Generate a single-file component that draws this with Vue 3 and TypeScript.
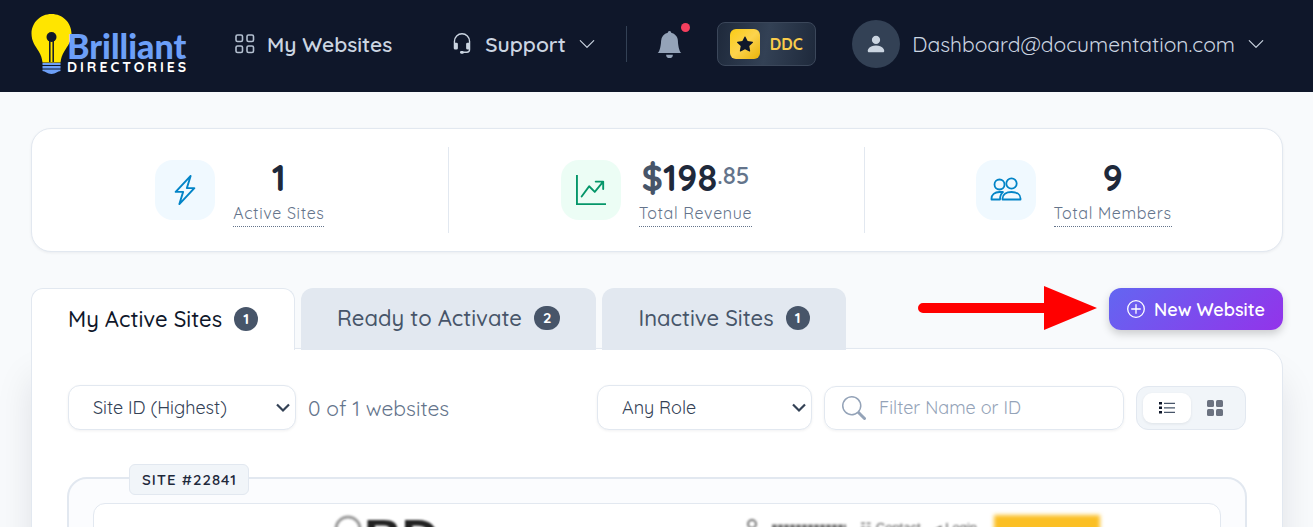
<script setup lang="ts">
import { ref } from 'vue'

interface Stat { id: string; label: string; whole: string; prefix?: string; cents?: string; tone: string; icon: string }
interface Tab { id: string; label: string; count: number }

const stats: Stat[] = [
  { id: 'sites', label: 'Active Sites', whole: '1', tone: 'sky', icon: 'bolt' },
  { id: 'revenue', label: 'Total Revenue', whole: '198', prefix: '$', cents: '.85', tone: 'green', icon: 'chart' },
  { id: 'members', label: 'Total Members', whole: '9', tone: 'sky', icon: 'people' },
]
const tabs: Tab[] = [
  { id: 'active', label: 'My Active Sites', count: 1 },
  { id: 'ready', label: 'Ready to Activate', count: 2 },
  { id: 'inactive', label: 'Inactive Sites', count: 1 },
]
const current = ref('active')
const sort = ref('highest')
const role = ref('any')
const query = ref('')
const view = ref('list')
</script>

<template>
  <div class="page">
    <header class="topbar">
      <a class="logo" href="#" aria-label="Brilliant Directories">
        <svg width="156" height="62" viewBox="0 0 156 62">
          <path fill="#ffe500" d="M20.500 1C9.400 1 .5 9.700 .5 20.500c0 8 4 12.500 7 17.500 2.600 4.200 3.500 7 4 11.500h18c.5-4.500 1.400-7.300 4-11.500 3-5 7-9.500 7-17.500C40.500 9.700 31.600 1 20.500 1z" />
          <circle cx="20.500" cy="24" r="5" fill="#0f172a" />
          <path d="M18.800 26v23M22.200 26v23" stroke="#0f172a" stroke-width="1.500" />
          <path fill="#6c9ff8" d="M11.500 50h18v2h-18zM11.500 53h18v2.500h-18zM11.500 56.500h18v1.500c-3 0-4.500 3-9 3s-6-3-9-3z" />
          <text x="36" y="46" class="logo-name">Brilliant</text>
          <text x="36" y="59" class="logo-sub">DIRECTORIES</text>
        </svg>
      </a>
      <nav class="nav">
        <a class="nav-link" href="#">
          <svg width="20" height="20" viewBox="0 0 20 20" fill="none" stroke="#b4c0d0" stroke-width="1.600">
            <rect x="1" y="1" width="6.500" height="6.500" rx="1.500" /><rect x="12" y="1" width="6.500" height="6.500" rx="1.500" />
            <rect x="1" y="12" width="6.500" height="6.500" rx="1.500" /><rect x="12" y="12" width="6.500" height="6.500" rx="1.500" />
          </svg>
          My Websites
        </a>
        <button class="nav-link" type="button">
          <svg width="22" height="22" viewBox="0 0 16 16" fill="currentColor"><path d="M8 1a5 5 0 0 0-5 5v1h1a1 1 0 0 1 1 1v3a1 1 0 0 1-1 1H3a1 1 0 0 1-1-1V6a6 6 0 1 1 12 0v6a2.500 2.500 0 0 1-2.500 2.500H9.366a1 1 0 0 1-.866.5h-1a1 1 0 1 1 0-2h1a1 1 0 0 1 .866.5H11.500A1.500 1.500 0 0 0 13 12h-1a1 1 0 0 1-1-1V8a1 1 0 0 1 1-1h1V6a5 5 0 0 0-5-5" /></svg>
          Support
          <svg width="18" height="18" viewBox="0 0 16 16" fill="currentColor"><path d="M1.646 4.646a.5.5 0 0 1 .708 0L8 10.293l5.646-5.647a.5.5 0 0 1 .708.708l-6 6a.5.5 0 0 1-.708 0l-6-6a.5.5 0 0 1 0-.708" /></svg>
        </button>
      </nav>
      <span class="rule"></span>
      <button class="bell" type="button" aria-label="Notifications">
        <svg width="27" height="27" viewBox="0 0 16 16" fill="#94a3b8"><path d="M8 16a2 2 0 0 0 2-2H6a2 2 0 0 0 2 2m.995-14.901a1 1 0 1 0-1.990 0A5 5 0 0 0 3 6c0 1.098-.5 6-2 7h14c-1.500-1-2-5.902-2-7 0-2.420-1.720-4.440-4.005-4.901" /></svg>
        <span class="dot"></span>
      </button>
      <button class="ddc" type="button">
        <span class="star"><svg width="16" height="16" viewBox="0 0 16 16" fill="#0f172a"><path d="M3.612 15.443c-.386.198-.824-.149-.746-.592l.83-4.730L.173 6.765c-.329-.314-.158-.888.283-.95l4.898-.696L7.538.792c.197-.39.73-.39.927 0l2.184 4.327 4.898.696c.441.062.612.636.282.95l-3.522 3.356.83 4.730c.078.443-.36.79-.746.592L8 13.187l-4.389 2.256z" /></svg></span>
        DDC
      </button>
      <button class="account" type="button">
        <span class="avatar"><svg width="22" height="22" viewBox="0 0 16 16" fill="#cbd5e1"><path d="M3 14s-1 0-1-1 1-4 6-4 6 3 6 4-1 1-1 1zm5-6a3 3 0 1 0 0-6 3 3 0 0 0 0 6" /></svg></span>
        <span>Dashboard@documentation.com</span>
        <svg width="18" height="18" viewBox="0 0 16 16" fill="currentColor"><path d="M1.646 4.646a.5.5 0 0 1 .708 0L8 10.293l5.646-5.647a.5.5 0 0 1 .708.708l-6 6a.5.5 0 0 1-.708 0l-6-6a.5.5 0 0 1 0-.708" /></svg>
      </button>
    </header>

    <main class="main">
      <section class="stats">
        <div v-for="s in stats" :key="s.id" class="stat">
          <span class="stat-icon" :class="s.tone">
            <svg v-if="s.icon === 'bolt'" width="30" height="30" viewBox="0 0 16 16" fill="currentColor"><path d="M11.251.068a.5.5 0 0 1 .227.58L9.677 6.500H13a.5.5 0 0 1 .364.843l-8 8.500a.5.5 0 0 1-.842-.49L6.323 9.500H3a.5.5 0 0 1-.364-.843l8-8.500a.5.5 0 0 1 .615-.09zM4.157 8.500H7a.5.5 0 0 1 .478.647L6.110 13.590l5.732-6.090H9a.5.5 0 0 1-.478-.647L9.890 2.410z" /></svg>
            <svg v-else-if="s.icon === 'chart'" width="30" height="30" viewBox="0 0 16 16" fill="currentColor"><path d="M0 0h1v15h15v1H0zm10 3.500a.5.5 0 0 1 .5-.5h4a.5.5 0 0 1 .5.5v4a.5.5 0 0 1-1 0V4.900l-3.613 4.417a.5.5 0 0 1-.74.037L7.060 6.767l-3.656 5.027a.5.5 0 0 1-.808-.588l4-5.500a.5.5 0 0 1 .758-.06l2.609 2.610L13.445 4H10.500a.5.5 0 0 1-.5-.5" /></svg>
            <svg v-else width="32" height="32" viewBox="0 0 32 32" fill="none" stroke="currentColor" stroke-width="1.800" stroke-linejoin="round">
              <circle cx="9.500" cy="10.500" r="5" /><circle cx="21.500" cy="9.500" r="5.200" />
              <path d="M12.500 25.500v-1c0-4 3.600-6.500 9-6.500s9 2.500 9 6.500v1z" />
              <path d="M13 18H9.500c-5 0-8 3-8 6.500v1H10c0-3 .8-5.700 3-7.500z" />
            </svg>
          </span>
          <div class="stat-copy">
            <strong class="stat-value"><span v-if="s.prefix" class="prefix">{{ s.prefix }}</span>{{ s.whole }}<span v-if="s.cents" class="cents">{{ s.cents }}</span></strong>
            <span class="stat-label">{{ s.label }}</span>
          </div>
        </div>
      </section>

      <div class="tab-row">
        <div class="tabs" role="tablist">
          <button v-for="t in tabs" :key="t.id" class="tab" :class="{ on: current === t.id }" type="button" role="tab" :aria-selected="current === t.id" @click="current = t.id">
            {{ t.label }} <span class="count">{{ t.count }}</span>
          </button>
        </div>
        <div class="create">
          <svg class="pointer" width="180" height="44" viewBox="0 0 180 44" fill="#ff0000" aria-hidden="true"><path d="M5 17h121V0l53 22-53 22V27H5a5 5 0 0 1 0-10z" /></svg>
          <button class="new-site" type="button">
            <svg width="18" height="18" viewBox="0 0 18 18" fill="none" stroke="#fff" stroke-width="1.300" stroke-linecap="round"><circle cx="9" cy="9" r="8.300" /><path d="M9 4.700v8.600M4.700 9h8.600" /></svg>
            New Website
          </button>
        </div>
      </div>

      <section class="panel">
        <form class="tools" @submit.prevent>
          <span class="picker sort">
            <select v-model="sort" aria-label="Sort websites"><option value="highest">Site ID (Highest)</option><option value="lowest">Site ID (Lowest)</option></select>
            <svg class="caret" width="14" height="10" viewBox="0 0 14 10" fill="none" stroke="#334155" stroke-width="2.200"><path d="M1 1.500l6 6 6-6" /></svg>
          </span>
          <span class="results">0 of 1 websites</span>
          <span class="picker role">
            <select v-model="role" aria-label="Role"><option value="any">Any Role</option><option value="owner">Owner</option></select>
            <svg class="caret" width="14" height="10" viewBox="0 0 14 10" fill="none" stroke="#334155" stroke-width="2.200"><path d="M1 1.500l6 6 6-6" /></svg>
          </span>
          <label class="search">
            <svg width="24" height="24" viewBox="0 0 16 16" fill="#94a3b8"><path d="M11.742 10.344a6.500 6.500 0 1 0-1.397 1.398h-.001q.044.06.098.115l3.850 3.850a1 1 0 0 0 1.415-1.414l-3.850-3.850a1 1 0 0 0-.115-.1zM12 6.500a5.500 5.500 0 1 1-11 0 5.500 5.500 0 0 1 11 0" /></svg>
            <input v-model="query" type="text" placeholder="Filter Name or ID" aria-label="Filter Name or ID" />
          </label>
          <span class="views">
            <button type="button" aria-label="List view" :class="{ on: view === 'list' }" @click="view = 'list'">
              <svg width="16" height="12" viewBox="0 0 16 12"><path d="M0 0h3v2.500H0zM0 4.500h3v2.500H0zM0 9h3v2.500H0z" fill="#0f172a" /><path d="M5 1.300H16M5 5.800H16M5 10.300H16" stroke="#475569" stroke-width="1.300" /></svg>
            </button>
            <button type="button" aria-label="Grid view" :class="{ on: view === 'grid' }" @click="view = 'grid'">
              <svg width="16" height="16" viewBox="0 0 16 16" fill="#6b7280"><rect width="7" height="7" rx="1.500" /><rect x="9" width="7" height="7" rx="1.500" /><rect y="9" width="7" height="7" rx="1.500" /><rect x="9" y="9" width="7" height="7" rx="1.500" /></svg>
            </button>
          </span>
        </form>

        <article class="site">
          <span class="site-id">SITE #22841</span>
          <div class="preview">
            <div class="brand"><svg width="30" height="40" viewBox="0 0 30 40" fill="none" stroke="#999" stroke-width="3"><circle cx="14" cy="14" r="12" /></svg><b>B</b><b>D</b></div>
            <div class="menu">
              <svg width="12" height="18" viewBox="0 0 12 18" fill="none" stroke="#777" stroke-width="2"><circle cx="6" cy="5" r="4" /><path d="M1 17c0-4 2-6 5-6s5 2 5 6" /></svg>
              <svg width="74" height="12" viewBox="0 0 74 12" stroke="#777" stroke-width="9" stroke-dasharray="5 1"><path d="M0 7h74" /></svg>
              <span>☷ Contact</span><span>◂ Login</span>
            </div>
            <div class="cta"></div>
          </div>
        </article>
      </section>
    </main>
  </div>
</template>

<style>
html, body { background: #f8fafc; }
</style>

<style scoped>
.page { height: 100vh; overflow: hidden; background: #f8fafc; font-family: Quicksand, Lato, "Open Sans", sans-serif; color: #1e293b; }
.page *, .page { box-sizing: border-box; }
button, select, input { font: inherit; color: inherit; }
button { border: 0; padding: 0; background: none; cursor: pointer; }
svg { display: block; flex: none; }
.topbar { height: 92px; padding: 0 48px 4px 31px; display: flex; align-items: center; background: #0f172a; color: #cbd5e1; font-size: 21px; line-height: 28px; white-space: nowrap; }
.logo-name { font: 900 34px Lato, sans-serif; fill: #6c9ff8; }
.logo-sub { font: 700 14px Quicksand, Lato, sans-serif; letter-spacing: 3px; fill: #fff; }
.nav { display: flex; margin-left: 48px; gap: 59px; font-weight: 600; }
.nav-link { display: flex; align-items: center; gap: 12px; color: inherit; text-decoration: none; }
.rule { width: 1px; height: 36px; margin-left: 30px; background: #334155; }
.bell { position: relative; margin-left: 29px; }
.dot { position: absolute; top: -8px; right: -7px; width: 9px; height: 9px; border-radius: 50%; background: #f43f5e; }
.ddc { display: flex; align-items: center; gap: 10px; height: 44px; margin-left: 34px; padding: 0 12px; border: 1px solid #3b475a; border-radius: 8px; background: linear-gradient(100deg, #1e293b, #334155 50%, #1e293b); color: #facc4b; font-size: 16px; font-weight: 700; }
.star { display: grid; place-items: center; width: 30px; height: 30px; border-radius: 6px; background: linear-gradient(135deg, #facc15, #fcd34d 50%, #eab308); }
.account { display: flex; align-items: center; gap: 12px; margin-left: auto; }
.avatar { display: grid; place-items: center; width: 48px; height: 48px; border-radius: 50%; background: #334155; }
.main { padding: 36px 30px 0 31px; }
.stats { display: grid; grid-template-columns: repeat(3, 1fr); padding: 18px 0; border: 1px solid #e2e8f0; border-radius: 20px; background: #fff; box-shadow: 0 1px 3px rgba(15, 23, 42, .06); }
.stat { display: flex; align-items: center; justify-content: center; gap: 18px; height: 86px; border-right: 1px solid #e2e8f0; }
.stat:last-child { border-right: 0; }
.stat-icon { display: grid; place-items: center; width: 60px; height: 60px; border-radius: 18px; }
.sky { color: #0284c7; background: #f0f9ff; }
.green { color: #059669; background: #ecfdf5; }
.stat-copy { display: flex; flex-direction: column; align-items: center; padding-top: 4px; }
.stat-value { display: flex; font-size: 36px; line-height: 42px; font-weight: 700; }
.prefix { color: #475569; }
.cents { font-size: 24px; line-height: 36px; font-weight: 600; color: #64748b; }
.stat-label { padding: 2px 0 1px; font-size: 16px; line-height: 24px; letter-spacing: .04em; color: #64748b; border-bottom: 1px dotted #64748b; }
.tab-row { display: flex; justify-content: space-between; align-items: flex-start; margin-top: 36px; }
.tabs { position: relative; z-index: 1; display: flex; gap: 6px; margin-bottom: -2px; }
.tab { display: flex; align-items: center; gap: 12px; height: 62px; padding: 0 36px 2px; border-radius: 12px 12px 0 0; background: #e2e8f0; color: #475569; font-size: 22px; font-weight: 500; white-space: nowrap; }
.tab.on { padding-bottom: 1px; border: 1px solid #e2e8f0; border-bottom: 0; background: #fff; color: #0f172a; }
.count { min-width: 24px; height: 24px; padding: 0 9px; border-radius: 12px; background: #475569; color: #fff; font-size: 15px; line-height: 24px; font-weight: 700; }
.create { position: relative; }
.pointer { position: absolute; top: -2px; right: calc(100% + 11px); }
.new-site { display: flex; align-items: center; gap: 9px; height: 42px; padding: 0 18px; border-radius: 12px; background: linear-gradient(135deg, #6366f1, #9333ea); color: #fff; font-size: 18px; font-weight: 600; white-space: nowrap; box-shadow: 0 4px 9px rgba(0, 0, 0, .18); }
.panel { padding: 36px 36px 60px; border: 1px solid #e2e8f0; border-radius: 0 20px 0 0; background: #fff; box-shadow: 0 30px 36px rgba(15, 23, 42, .1); }
.tools { display: flex; align-items: center; gap: 12px; font-size: 18px; }
.picker { position: relative; }
.sort { width: 228px; }
.role { width: 215px; margin-left: auto; }
select { appearance: none; display: block; width: 100%; height: 45px; padding: 0 36px 0 24px; border: 1px solid #e2e8f0; border-radius: 12px; background: #fff; color: #334155; box-shadow: 0 1px 3px rgba(15, 23, 42, .06); }
.caret { position: absolute; top: 18px; right: 6px; pointer-events: none; }
.results { font-size: 21px; color: #64748b; white-space: nowrap; }
.search { display: flex; align-items: center; gap: 13px; width: 300px; height: 44px; padding: 0 17px; border: 1px solid #e2e8f0; border-radius: 12px; box-shadow: 0 1px 3px rgba(15, 23, 42, .06); }
.search input { min-width: 0; flex: 1; padding: 0; border: 0; outline: 0; background: none; }
.search input::placeholder { color: #94a3b8; opacity: 1; }
.views { display: flex; width: 110px; height: 44px; padding: 6px; border: 1px solid #e2e8f0; border-radius: 12px; background: #f1f5f9; }
.views button { display: grid; place-items: center; width: 48px; height: 30px; border-radius: 9px; }
.views .on { background: #fff; box-shadow: 0 1px 3px rgba(15, 23, 42, .08); }
.site { position: relative; margin: 47px -1px 0; padding: 24px; border: 2px solid #e2e8f0; border-radius: 20px; background: #fbfcfe; }
.site-id { position: absolute; top: -15px; left: 60px; padding: 0 11px 0 12px; border: 1px solid #e2e8f0; border-radius: 6px; background: #f1f5f9; color: #1e293b; font-size: 15px; line-height: 29px; font-weight: 600; letter-spacing: 1px; }
.preview { display: flex; align-items: flex-start; height: 200px; padding: 11px 120px 0 240px; border: 1px solid #e2e8f0; border-radius: 12px; background: #fff; overflow: hidden; }
.brand { display: flex; color: #222; font: 52px/46px "Liberation Sans", sans-serif; filter: blur(1px); }
.menu { display: flex; align-items: center; gap: 14px; margin-left: auto; margin-right: 17px; padding-top: 4px; color: #555; font: 13px/16px "Liberation Sans", sans-serif; filter: blur(1px); }
.cta { width: 106px; height: 34px; background: #fbbf24; filter: blur(2px); }
</style>
